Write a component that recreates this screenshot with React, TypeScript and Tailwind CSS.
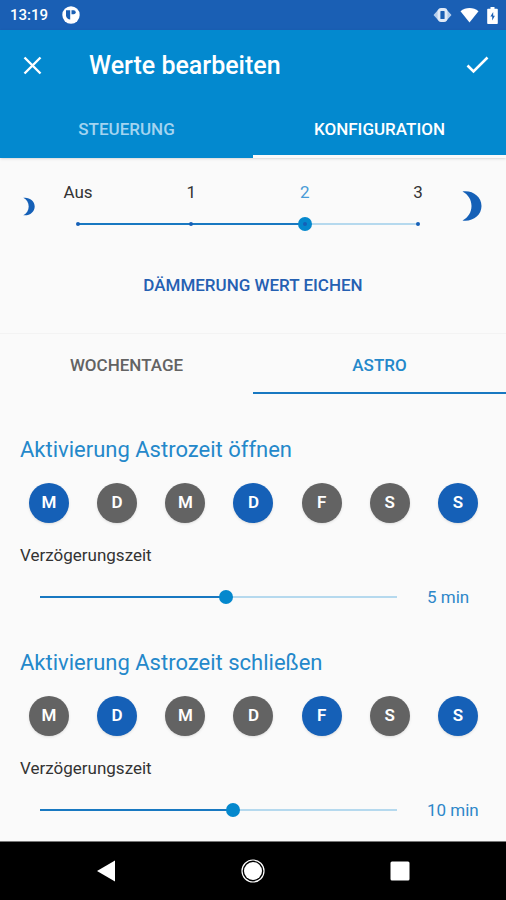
import { useState } from "react";

const DAYS = ["Montag", "Dienstag", "Mittwoch", "Donnerstag", "Freitag", "Samstag", "Sonntag"];
const LEVELS = ["Aus", "1", "2", "3"];

type RangeSliderProps = {
  label: string;
  min: number;
  max: number;
  step: number;
  value: number;
  ticks?: number;
  onChange: (value: number) => void;
};

function RangeSlider({ label, min, max, step, value, ticks = 0, onChange }: RangeSliderProps) {
  const percent = ((value - min) / (max - min)) * 100;

  return (
    <div className="grid h-4 flex-1 items-center">
      <div className="col-start-1 row-start-1 mx-[7px] h-[2px] bg-[#b5d9ee]">
        <div className="h-full bg-[#1878c1]" style={{ width: `${percent}%` }} />
      </div>
      <input
        aria-label={label}
        className="col-start-1 row-start-1 h-4 w-full cursor-pointer appearance-none bg-transparent [&::-webkit-slider-thumb]:size-[14px] [&::-webkit-slider-thumb]:appearance-none [&::-webkit-slider-thumb]:rounded-full [&::-webkit-slider-thumb]:bg-[#0588cd]"
        max={max}
        min={min}
        onChange={(event) => onChange(Number(event.target.value))}
        step={step}
        type="range"
        value={value}
      />
      {ticks > 0 && (
        <div className="pointer-events-none z-10 col-start-1 row-start-1 mx-[5px] flex justify-between">
          {Array.from({ length: ticks }, (_, index) => (
            <span className="size-1 rounded-full bg-[#1560b7]" key={index} />
          ))}
        </div>
      )}
    </div>
  );
}

function Moon({ className }: { className: string }) {
  return (
    <svg aria-hidden="true" className={className} fill="#1560b7" viewBox="0 0 20 30">
      <path d="M0.5 0.5C10.5 -1 19.5 5.5 19.5 15S10.5 31 0.5 29.5C6 26.5 9.5 21.5 9.5 15S6 3.5 0.5 0.5Z" />
    </svg>
  );
}

function StatusBar() {
  return (
    <div className="flex h-[30px] items-center justify-between bg-[#1a5fb4] pr-2 pl-[10px] text-white">
      <div className="flex items-center gap-[14px]">
        <span className="text-[15px] leading-5 font-medium">13:19</span>
        <svg aria-hidden="true" className="size-[18px]" viewBox="0 0 18 18">
          <circle cx="9" cy="9" fill="white" r="8.7" />
          <path d="M4 4.2h4.2v9.4A5.200 5.200 0 0 1 4 10z" fill="#1a5fb4" />
          <path d="M9.500 4.200h2.200a2 2 0 0 1 0 4H9.500z" fill="#1a5fb4" />
        </svg>
      </div>
      <div className="flex items-center gap-2">
        <svg aria-hidden="true" className="h-4 w-[19px]" viewBox="0 0 19 16">
          <path d="M5 3 .5 8 5 13zM14 3l4.500 5-4.500 5z" fill="#b4cdeb" />
          <rect fill="none" height="11" rx="2" stroke="#e0eaf7" strokeWidth="2.800" width="7" x="6" y="2.500" />
        </svg>
        <svg aria-hidden="true" className="h-4 w-[19px]" viewBox="0 0 19 16">
          <path d="M.5 4.200C5.500-.2 13.500-.2 18.500 4.200L9.500 15.500z" fill="white" />
        </svg>
        <svg aria-hidden="true" className="h-[17px] w-[11px]" viewBox="0 0 11 17">
          <path d="M3.500 0h4v1.800H10a.8.8 0 0 1 .8.800v13.600a.8.800 0 0 1-.8.800H1a.8.800 0 0 1-.8-.8V2.600A.8.800 0 0 1 1 1.800h2.500z" fill="white" />
          <path d="M6.200 5 3.400 9.600h1.800v3.800l2.700-4.600H6.200z" fill="#1a5fb4" />
        </svg>
      </div>
    </div>
  );
}

type AstroSectionProps = {
  title: string;
  initialDays: boolean[];
  initialDelay: number;
};

function AstroSection({ title, initialDays, initialDelay }: AstroSectionProps) {
  const [days, setDays] = useState(initialDays);
  const [delay, setDelay] = useState(initialDelay);

  function toggleDay(index: number) {
    setDays(days.map((active, i) => (i === index ? !active : active)));
  }

  return (
    <section>
      <h2 className="px-5 text-[22px] leading-8 text-[#2488ca]">{title}</h2>
      <div className="mt-[17px] flex justify-between pr-7 pl-[29px]">
        {DAYS.map((day, index) => (
          <button
            aria-label={day}
            aria-pressed={days[index]}
            className={`size-10 rounded-full text-[17px] font-semibold text-white shadow-sm ${days[index] ? "bg-[#1560b7]" : "bg-[#636363]"}`}
            key={day}
            onClick={() => toggleDay(index)}
            type="button"
          >
            {day[0]}
          </button>
        ))}
      </div>
      <p className="mt-5 px-5 text-[17px] leading-6 text-[#333333]">Verzögerungszeit</p>
      <div className="mt-[22px] flex items-center pl-[33px]">
        <RangeSlider label={`${title} Verzögerungszeit`} max={120} min={-120} onChange={setDelay} step={5} value={delay} />
        <output className="w-[102px] pl-[23px] text-[17px] leading-4 text-[#2d87c9]">{delay} min</output>
      </div>
    </section>
  );
}

export default function App() {
  const [level, setLevel] = useState(2);
  const [page, setPage] = useState("Konfiguration");
  const [mode, setMode] = useState("Astro");

  return (
    <div className="flex min-h-screen flex-col bg-[#fafafa] font-['Roboto',sans-serif]">
      <StatusBar />
      <header className="relative bg-[#0389cf] text-white shadow-sm">
        <div className="flex h-[72px] items-center pr-4 pl-5">
          <button aria-label="Schließen" className="size-6" type="button">
            <svg aria-hidden="true" fill="none" stroke="currentColor" strokeWidth="2.400" viewBox="0 0 24 24">
              <path d="m4.500 3.500 16 16m0-16-16 16" />
            </svg>
          </button>
          <h1 className="ml-[45px] flex-1 text-[25px] leading-8 font-medium">Werte bearbeiten</h1>
          <button aria-label="Speichern" className="size-6" type="button">
            <svg aria-hidden="true" fill="none" stroke="currentColor" strokeWidth="2.600" viewBox="0 0 24 24">
              <path d="m1.500 11.500 6 6L21.500 3.500" />
            </svg>
          </button>
        </div>
        <div className="grid h-14 grid-cols-2" role="tablist">
          {["Steuerung", "Konfiguration"].map((name) => (
            <button
              aria-selected={page === name}
              className={`border-b-[3px] pt-0.5 text-[17px] font-medium uppercase ${page === name ? "border-[#fafafa]" : "border-transparent text-[#a3d4f0]"}`}
              key={name}
              onClick={() => setPage(name)}
              role="tab"
              type="button"
            >
              {name}
            </button>
          ))}
        </div>
      </header>

      <main className="flex flex-1 flex-col">
        <section className="h-[176px] shrink-0 border-b border-[#f3f3f3] pt-[22px]">
          <div className="grid grid-cols-[58px_1fr_68px] items-center">
            <Moon className="h-[19px] w-3 justify-self-center" />
            <div>
              <div className="flex justify-between text-[17px] leading-6">
                {LEVELS.map((name, index) => (
                  <span className={`w-10 text-center ${level === index ? "text-[#489bd6]" : "text-[#333333]"}`} key={name}>
                    {name}
                  </span>
                ))}
              </div>
              <div className="mt-3 flex px-[13px]">
                <RangeSlider label="Dämmerung" max={3} min={0} onChange={setLevel} step={1} ticks={4} value={level} />
              </div>
            </div>
            <Moon className="h-[30px] w-5 justify-self-center" />
          </div>
          <button className="mt-[30px] block h-12 w-full text-[17px] font-medium text-[#2560b2] uppercase" type="button">
            Dämmerung Wert eichen
          </button>
        </section>

        <div className="grid h-[60px] shrink-0 grid-cols-2" role="tablist">
          {["Wochentage", "Astro"].map((name) => (
            <button
              aria-selected={mode === name}
              className={`border-b-2 pt-1.5 text-[17px] font-medium uppercase ${mode === name ? "border-[#1878c1] text-[#2488ca]" : "border-transparent text-[#636363]"}`}
              key={name}
              onClick={() => setMode(name)}
              role="tab"
              type="button"
            >
              {name}
            </button>
          ))}
        </div>

        <div className="flex flex-col gap-[42px] pt-10 pb-5">
          <AstroSection
            initialDays={[true, false, false, true, false, false, true]}
            initialDelay={5}
            title="Aktivierung Astrozeit öffnen"
          />
          <AstroSection
            initialDays={[false, true, false, false, true, false, true]}
            initialDelay={10}
            title="Aktivierung Astrozeit schließen"
          />
        </div>
      </main>

      <nav className="flex h-[59px] shrink-0 items-center justify-between border-t border-[#777777] bg-black px-[94px]">
        <button aria-label="Zurück" type="button">
          <svg aria-hidden="true" className="size-6" fill="white" viewBox="0 0 24 24">
            <path d="M21 1.500v21L3 12z" />
          </svg>
        </button>
        <button aria-label="Startseite" type="button">
          <svg aria-hidden="true" className="size-6" viewBox="0 0 24 24">
            <circle cx="12" cy="12" fill="none" r="11" stroke="white" strokeWidth="1.200" />
            <circle cx="12" cy="12" fill="white" r="9" />
          </svg>
        </button>
        <button aria-label="Übersicht" type="button">
          <svg aria-hidden="true" className="size-6" fill="white" viewBox="0 0 24 24">
            <rect height="19" rx="1.500" width="19" x="2.500" y="2.500" />
          </svg>
        </button>
      </nav>
    </div>
  );
}
